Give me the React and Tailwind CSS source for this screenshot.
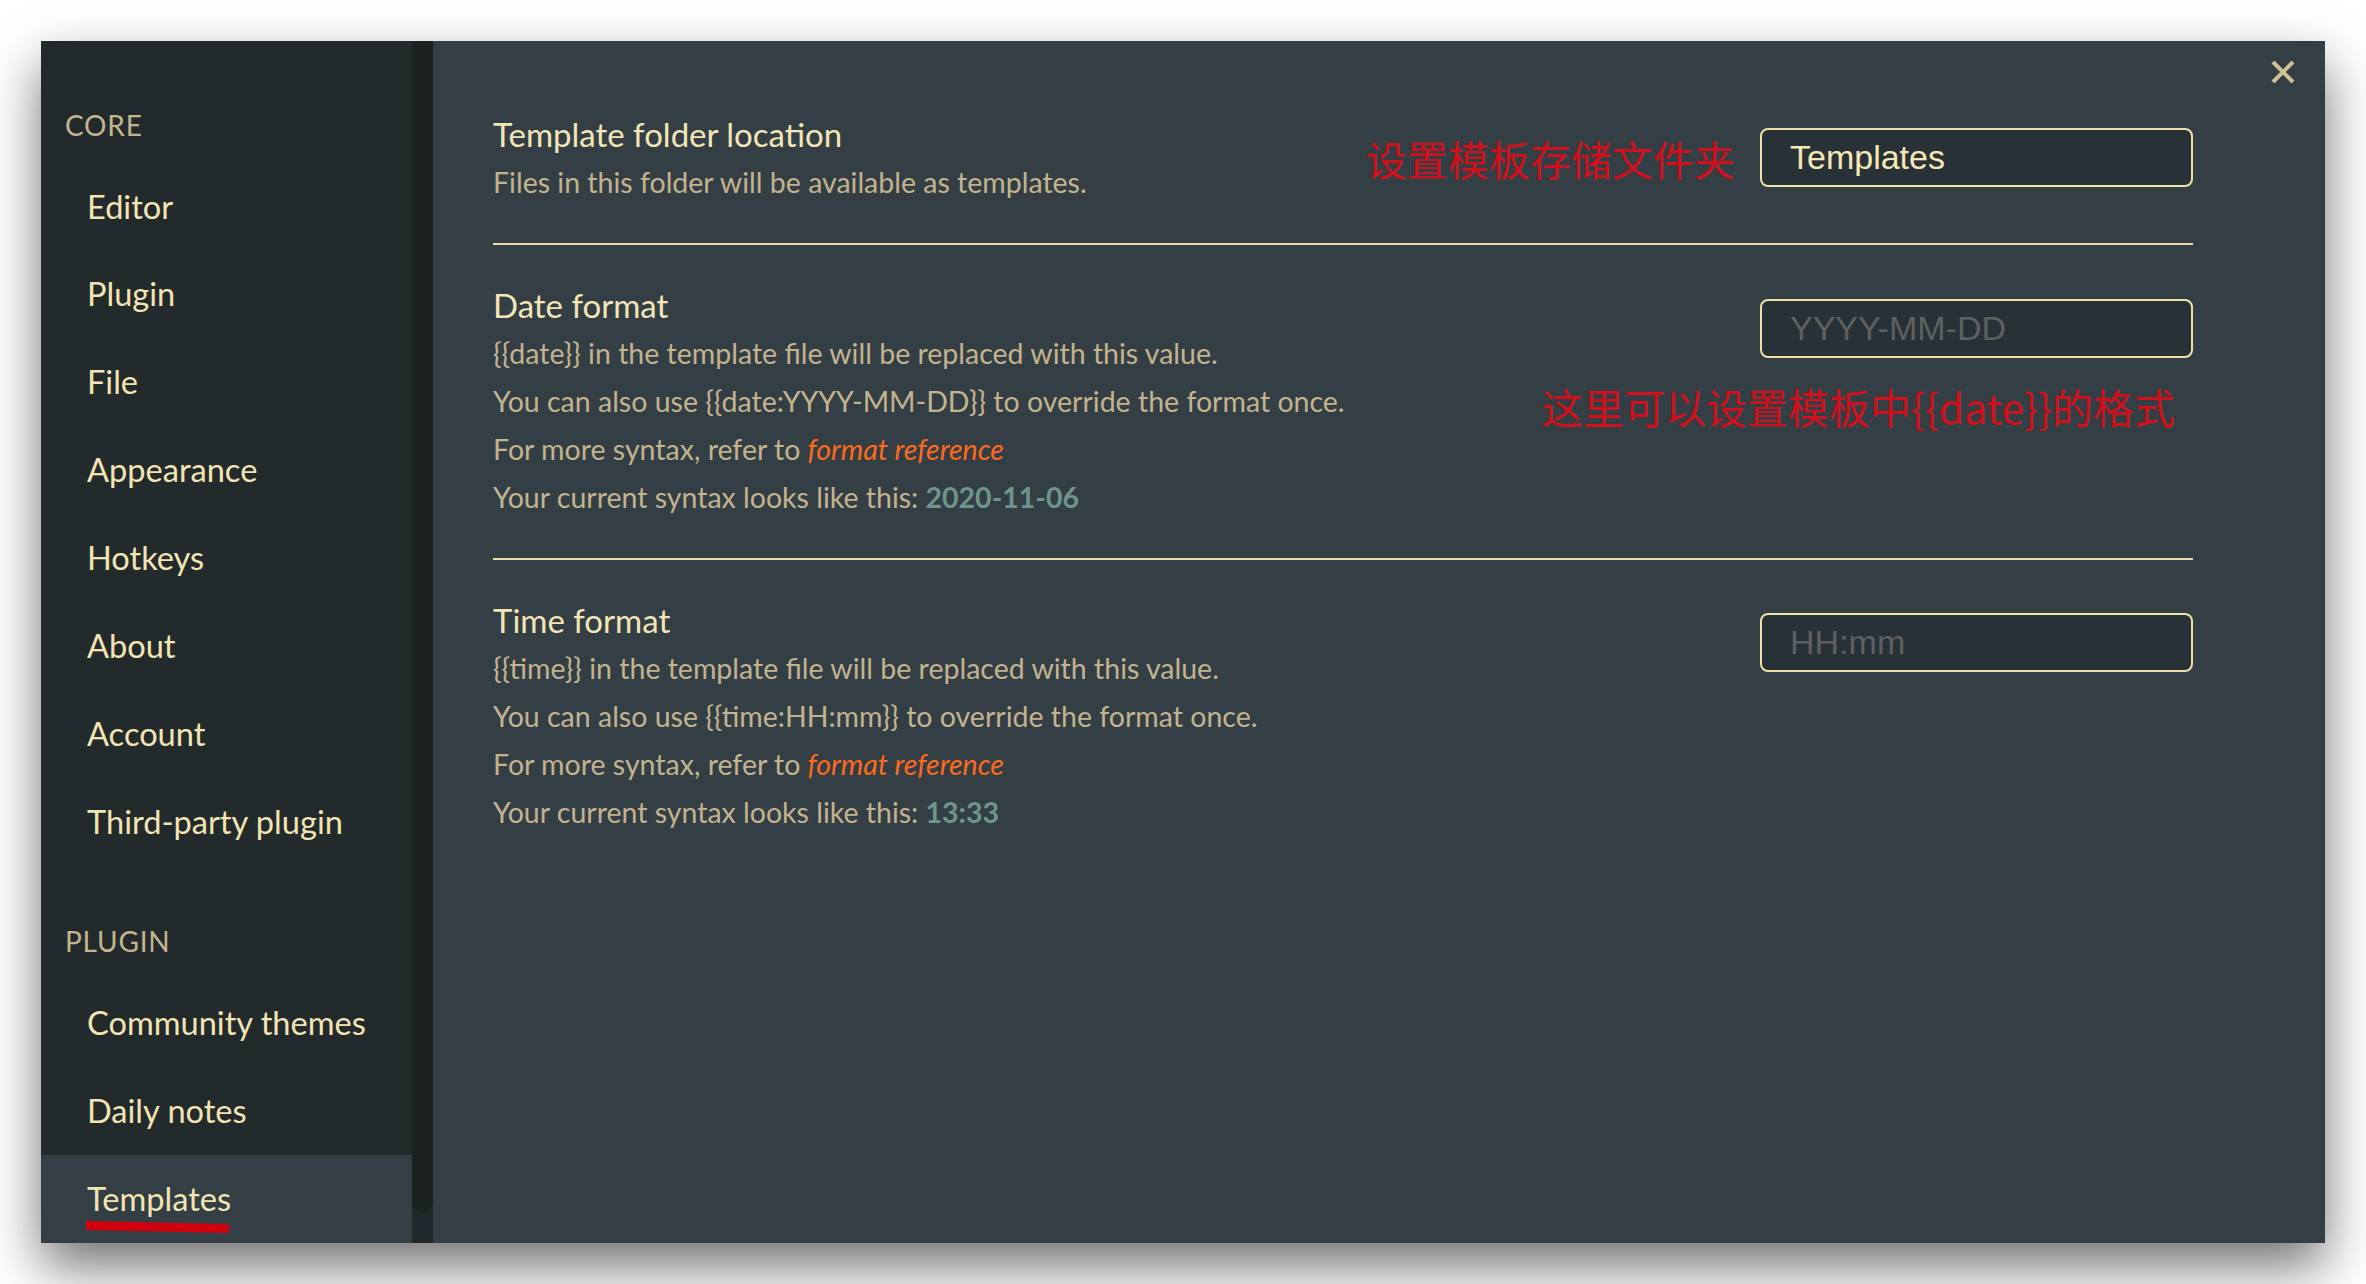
import React from "react";

const coreItems = ["Editor", "Plugin", "File", "Appearance", "Hotkeys", "About", "Account", "Third-party plugin"];
const pluginItems = ["Community themes", "Daily notes", "Templates"];

const SideItem = ({ label, active }) => (
  <div
    className={`relative h-[88px] flex items-center pl-[46px] text-[32.6px] text-[#f2e4b3] ${
      active ? "bg-[#333f45]" : ""
    }`}
  >
    {label}
    {active && (
      <svg className="absolute left-[45px] top-[66px]" width="145" height="12" viewBox="0 0 145 12">
        <polygon points="0,0 143,3 143,12 0,9" fill="#d0000f" />
      </svg>
    )}
  </div>
);

const Setting = ({ title, lines, children, last }) => (
  <div className={`flex justify-between pt-[36px] pb-[37px] ${last ? "" : "border-b-2 border-[#eadcaa]"}`}>
    <div className="flex flex-col">
      <div className="text-[33px] leading-[48px] text-[#f3e5b5]">{title}</div>
      {lines.map((line, i) => (
        <div key={i} className="text-[28.5px] leading-[48px] text-[#c3b38e]">
          {line}
        </div>
      ))}
    </div>
    {children}
  </div>
);

const Field = ({ value, placeholder }) => (
  <input
    readOnly
    value={value}
    placeholder={placeholder}
    className="w-[433px] h-[59px] rounded-[8px] border-2 border-[#eee0a8] bg-[#283236] pl-[28px] text-[34px] text-[#f5e8b6] placeholder:text-[#5e6061] outline-none font-['Liberation_Sans',Arial,sans-serif]"
  />
);

const Note = ({ children, className }) => (
  <div
    className={`text-[41px] leading-none text-[#d2101c] font-['Noto_Sans_CJK_SC','Noto_Sans',sans-serif] ${className}`}
  >
    {children}
  </div>
);

export default function App() {
  return (
    <div className="w-[2366px] h-[1284px] bg-white pt-[41px] pl-[41px] font-['Lato','Noto_Sans',sans-serif]">
      <div className="w-[2284px] h-[1202px] flex overflow-hidden shadow-[0_24px_50px_rgba(0,0,0,0.55)]">
        {/* sidebar */}
        <div className="w-[371px] bg-[#232a2c] flex flex-col">
          <div className="mt-[64px] mb-[18px] h-[40px] leading-[40px] pl-[24px] text-[28px] text-[#c4b58e] tracking-[0.8px]">
            CORE
          </div>
          {coreItems.map((item) => (
            <SideItem key={item} label={item} />
          ))}
          <div className="mt-[55px] mb-[18px] h-[40px] leading-[40px] pl-[24px] text-[28px] text-[#c4b58e] tracking-[0.8px]">
            PLUGIN
          </div>
          {pluginItems.map((item) => (
            <SideItem key={item} label={item} active={item === "Templates"} />
          ))}
        </div>

        {/* scrollbar */}
        <div className="w-[21px] bg-[#20282a] flex flex-col">
          <div className="h-[1171px] bg-[#1b2120] rounded-b-full" />
        </div>

        {/* content */}
        <div className="relative flex-1 bg-[#343f45] pl-[60px] pr-[132px] pt-[33px]">
          <button className="absolute top-[19px] right-[30px] w-[24px] h-[24px]">
            <svg width="24" height="24" viewBox="0 0 24 24">
              <path d="M2 2L22 22M22 2L2 22" stroke="#cfbf94" strokeWidth="4" />
            </svg>
          </button>

          <Setting title="Template folder location" lines={["Files in this folder will be available as templates."]}>
            <div className="flex items-start gap-[25px] mt-[18px]">
              <Note className="mt-[10px]">设置模板存储文件夹</Note>
              <Field value="Templates" />
            </div>
          </Setting>

          <Setting
            title="Date format"
            lines={[
              "{{date}} in the template file will be replaced with this value.",
              "You can also use {{date:YYYY-MM-DD}} to override the format once.",
              <>
                For more syntax, refer to <span className="italic text-[#ff6a1a]">format reference</span>
              </>,
              <>
                Your current syntax looks like this: <span className="font-bold text-[#6d958b]">2020-11-06</span>
              </>,
            ]}
          >
            <div className="flex flex-col items-end mt-[18px]">
              <Field placeholder="YYYY-MM-DD" />
              <Note className="mt-[28px] mr-[18px]">这里可以设置模板中{"{{date}}"}的格式</Note>
            </div>
          </Setting>

          <Setting
            last
            title="Time format"
            lines={[
              "{{time}} in the template file will be replaced with this value.",
              "You can also use {{time:HH:mm}} to override the format once.",
              <>
                For more syntax, refer to <span className="italic text-[#ff6a1a]">format reference</span>
              </>,
              <>
                Your current syntax looks like this: <span className="font-bold text-[#6d958b]">13:33</span>
              </>,
            ]}
          >
            <div className="mt-[17px]">
              <Field placeholder="HH:mm" />
            </div>
          </Setting>
        </div>
      </div>
    </div>
  );
}
